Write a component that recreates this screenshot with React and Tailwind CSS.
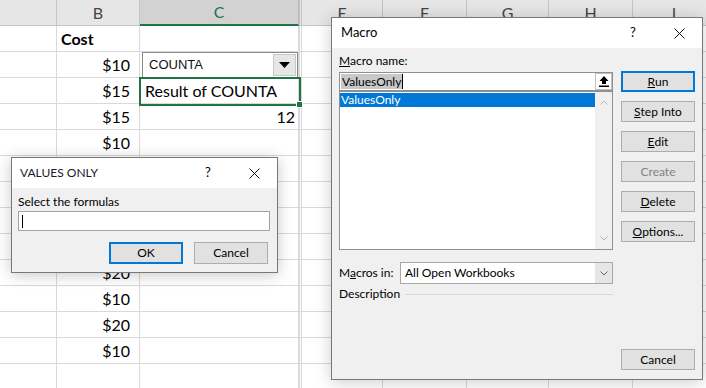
import React from 'react';

const cols = [
  { w: 'w-[57px]' },
  { w: 'w-[83px]', label: 'B' },
  { w: 'w-[159px]', label: 'C', active: true },
  { w: 'w-[3px]', hidden: true },
  { w: 'w-[81px]', label: 'E' },
  { w: 'w-[84px]', label: 'F' },
  { w: 'w-[82px]', label: 'G' },
  { w: 'w-[84px]', label: 'H' },
  { w: 'w-[83px]', label: 'I' },
];

// rows 6-9 sit under the VALUES ONLY dialog
const costs = ['Cost', '$10', '$15', '$15', '$10', '', '', '', '', '$20', '$10', '$20', '$10', ''];

const CloseX = () => (
  <svg width="11" height="11" viewBox="0 0 11 11">
    <path d="M0.5 0.5 L10.5 10.5 M10.5 0.5 L0.5 10.5" stroke="#111" strokeWidth="1" />
  </svg>
);

const Chevron = ({ down, color = '#b5b5b5' }) => (
  <svg width="8" height="5" viewBox="0 0 8 5">
    <path d={down ? 'M0.5 0.5 L4 4 L7.5 0.5' : 'M0.5 4.5 L4 1 L7.5 4.5'} stroke={color} strokeWidth="1" fill="none" />
  </svg>
);

const Btn = ({ children, primary, disabled }) => (
  <div
    className={`h-[21px] w-[74px] flex items-center justify-center bg-[#e1e1e1] text-[12px] ${
      primary ? 'border-2 border-[#0078d7]' : 'border border-[#adadad]'
    } ${disabled ? 'text-[#838383]' : 'text-black'}`}
  >
    {children}
  </div>
);

const Sheet = () => (
  <div className="flex flex-col font-['Lato',sans-serif]">
    <div className="flex h-[26px]">
      {cols.map((c, i) => (
        <div
          key={i}
          className={`${c.w} shrink-0 h-[26px] flex items-center justify-center text-[16px] border-r ${
            c.active
              ? 'bg-[#d2d2d2] text-[#217346] border-b-2 border-b-[#217346] border-r-[#bcbcbc]'
              : 'bg-[#e6e6e6] text-[#444] border-b border-[#c4c4c4]'
          } ${c.hidden ? 'border-l border-l-[#bcbcbc]' : ''}`}
        >
          {c.label}
        </div>
      ))}
    </div>
    {costs.map((v, r) => (
      <div key={r} className="flex h-[26px]">
        {cols.map((c, i) => (
          <div
            key={i}
            className={`${c.w} shrink-0 h-[26px] flex items-center border-r border-b border-[#d9d9d9] text-[16px] text-black ${
              c.hidden ? 'border-l border-l-[#d9d9d9]' : ''
            }`}
          >
            {i === 1 && r === 0 && <span className="pl-[4px] font-bold">{v}</span>}
            {i === 1 && r > 0 && v && <span className="ml-auto pr-[9px]">{v}</span>}
            {i === 2 && r === 2 && <span className="pl-[5px]">Result of COUNTA</span>}
            {i === 2 && r === 3 && <span className="ml-auto pr-[3px]">12</span>}
          </div>
        ))}
      </div>
    ))}
  </div>
);

export default function App() {
  return (
    <div className="relative w-[706px] h-[388px] overflow-hidden bg-white">
      <Sheet />

      {/* combo box in C2 */}
      <div className="absolute left-[142px] top-[52px] w-[156px] h-[26px] bg-white border border-[#8a8a8a] flex items-center font-['Liberation_Sans',sans-serif] text-[13px] text-[#111]">
        <span className="pl-[6px]">COUNTA</span>
        <div className="ml-auto mr-[1px] w-[23px] h-[22px] bg-[#e6e6e6] border border-[#c8c8c8] flex items-center justify-center">
          <svg width="11" height="6" viewBox="0 0 11 6">
            <path d="M0 0 L11 0 L5.5 6 Z" fill="#000" />
          </svg>
        </div>
      </div>

      {/* active cell */}
      <div className="absolute left-[139px] top-[77px] w-[162px] h-[29px] border-2 border-[#217346]" />
      <div className="absolute left-[296px] top-[101px] w-[7px] h-[7px] bg-[#217346] border border-white" />

      {/* VALUES ONLY dialog */}
      <div className="absolute left-[11px] top-[157px] w-[267px] h-[116px] border border-[#787878] bg-[#f0f0f0] shadow-[0_2px_14px_rgba(0,0,0,0.22)] font-['Lato',sans-serif] text-[12px] text-black flex flex-col">
        <div className="h-[30px] bg-white flex items-center">
          <span className="pl-[8px] text-[#1a1a2e]">VALUES ONLY</span>
          <span className="ml-auto w-[46px] text-center text-[13px]">?</span>
          <span className="w-[46px] flex justify-center">
            <CloseX />
          </span>
        </div>
        <div className="flex flex-col pl-[6px] pr-[7px]">
          <div className="mt-[7px] leading-[14px]">Select the formulas</div>
          <div className="mt-[2px] h-[20px] bg-white border border-[#a3a3a3] flex items-center">
            <div className="ml-[3px] w-[1px] h-[13px] bg-black" />
          </div>
          <div className="mt-[11px] mr-[2px] flex justify-end gap-[11px]">
            <div className="h-[22px] w-[74px] flex items-center justify-center bg-[#e1e1e1] border-2 border-[#0078d7]">OK</div>
            <div className="h-[22px] w-[74px] flex items-center justify-center bg-[#e1e1e1] border border-[#adadad]">Cancel</div>
          </div>
        </div>
      </div>

      {/* Macro dialog */}
      <div className="absolute left-[331px] top-[17px] w-[372px] h-[363px] border border-[#787878] bg-[#f0f0f0] shadow-[0_2px_16px_rgba(0,0,0,0.2)] font-['Lato',sans-serif] text-[12px] text-black flex flex-col">
        <div className="h-[30px] shrink-0 bg-white flex items-center">
          <span className="pl-[9px] text-[13px]">Macro</span>
          <span className="ml-auto w-[46px] text-center text-[13px]">?</span>
          <span className="w-[46px] flex justify-center">
            <CloseX />
          </span>
        </div>
        <div className="flex flex-1 pl-[7px] pr-[7px]">
          <div className="w-[274px] flex flex-col">
            <div className="mt-[6px] leading-[14px]">
              <span className="underline">M</span>acro name:
            </div>
            <div className="mt-[4px] h-[19px] bg-white border border-[#8f8f8f] flex items-center">
              <span className="ml-[1px] px-[1px] bg-[#c8c8c8] leading-[15px]">ValuesOnly</span>
              <div className="w-[1px] h-[15px] bg-black" />
              <div className="ml-auto w-[17px] h-[17px] border border-[#c0c0c0] bg-white flex items-center justify-center">
                <svg width="10" height="11" viewBox="0 0 10 11">
                  <path d="M5 0 L0.5 5 L3 5 L3 8 L7 8 L7 5 L9.5 5 Z" fill="#000" />
                  <rect x="0" y="9.5" width="10" height="1.5" fill="#000" />
                </svg>
              </div>
            </div>
            <div className="h-[159px] bg-white border border-[#8f8f8f] flex">
              <div className="flex-1 pt-[1px]">
                <div className="h-[14px] bg-[#0078d7] text-white leading-[14px] pl-[1px]">ValuesOnly</div>
              </div>
              <div className="w-[17px] bg-[#f0f0f0] flex flex-col items-center justify-between py-[8px]">
                <Chevron />
                <Chevron down />
              </div>
            </div>
            <div className="mt-[12px] flex items-center h-[22px]">
              <span className="w-[61px]">
                M<span className="underline">a</span>cros in:
              </span>
              <div className="w-[213px] h-[22px] bg-white border border-[#a8a8a8] flex items-center">
                <span className="pl-[4px]">All Open Workbooks</span>
                <div className="ml-auto w-[17px] h-[20px] bg-[#e6e6e6] flex items-center justify-center">
                  <Chevron down color="#666" />
                </div>
              </div>
            </div>
            <div className="mt-[3px] flex items-center leading-[14px]">
              <span>Description</span>
              <div className="ml-[5px] flex-1 h-[1px] bg-[#d8d8d8]" />
            </div>
          </div>
          <div className="ml-[8px] w-[74px] flex flex-col gap-[9px] pt-[23px] pb-[9px]">
            <Btn primary>
              <span className="underline">R</span>un
            </Btn>
            <Btn>
              <span className="underline">S</span>tep Into
            </Btn>
            <Btn>
              <span className="underline">E</span>dit
            </Btn>
            <Btn disabled>Create</Btn>
            <Btn>
              <span className="underline">D</span>elete
            </Btn>
            <Btn>
              <span className="underline">O</span>ptions...
            </Btn>
            <div className="mt-auto">
              <Btn>Cancel</Btn>
            </div>
          </div>
        </div>
      </div>
    </div>
  );
}
